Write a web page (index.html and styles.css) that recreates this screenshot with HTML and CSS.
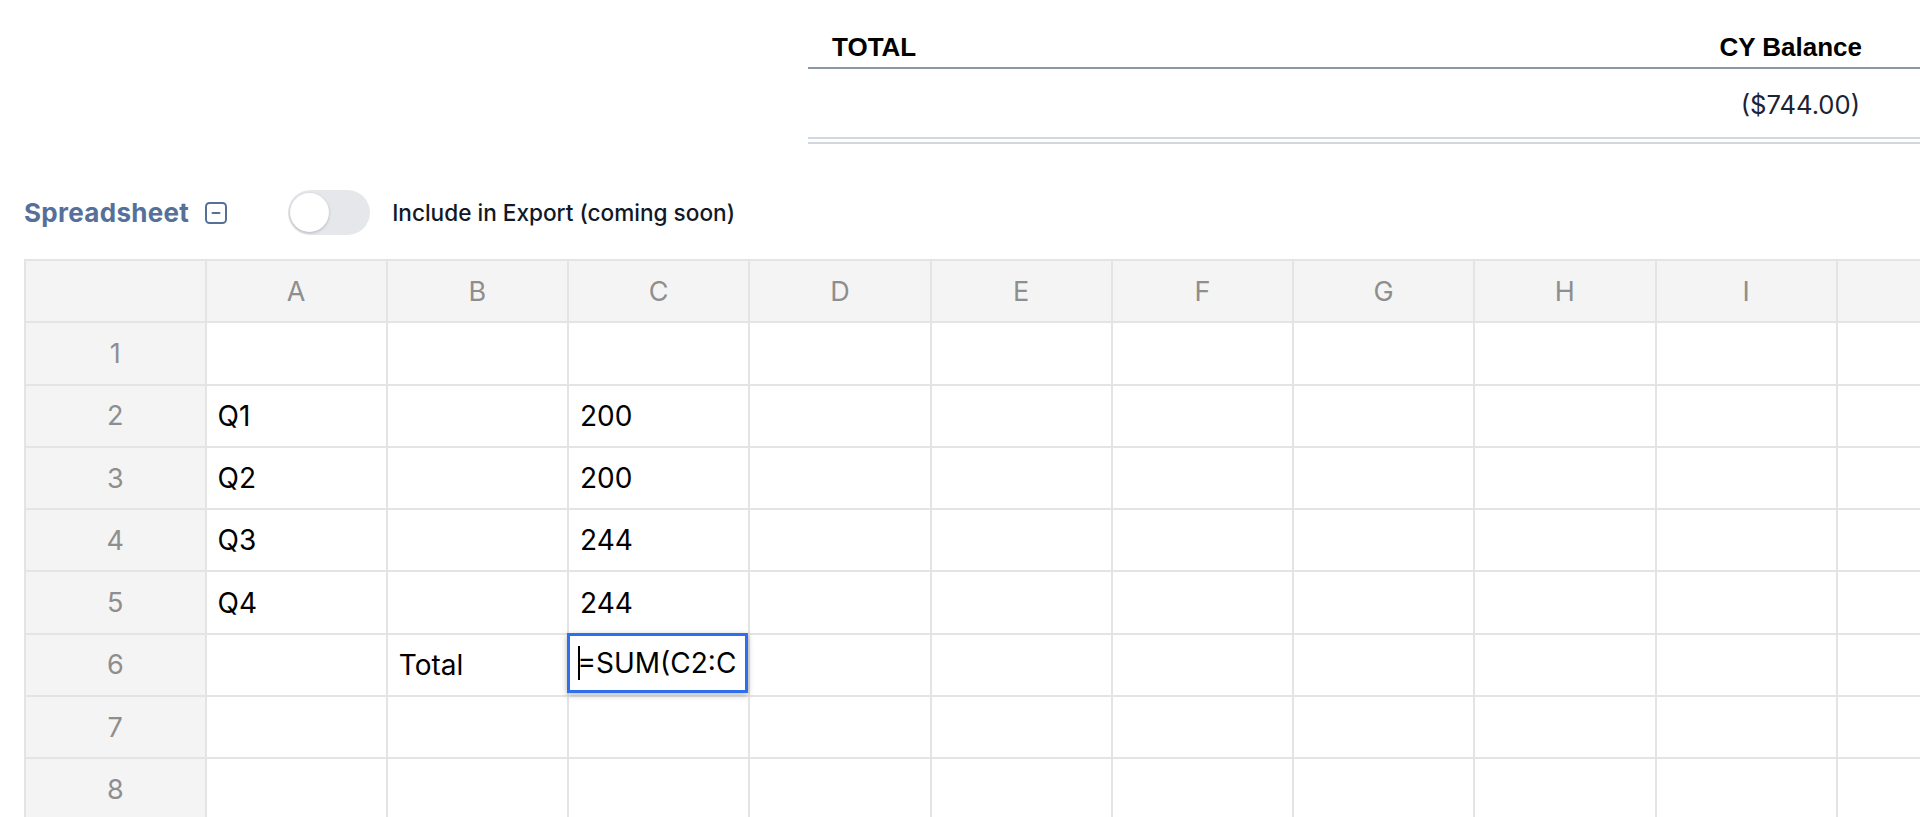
FILE: index.html
```html
<!DOCTYPE html>
<html lang="en">
<head>
<meta charset="utf-8">
<title>Spreadsheet</title>
<link rel="stylesheet" href="styles.css">
</head>
<body>
<div class="page">
  <section class="summary">
    <div class="sum-head"><span>TOTAL</span><span>CY Balance</span></div>
    <div class="sum-row"><span class="amount">($744.00)</span></div>
    <div class="sum-rule"></div>
  </section>

  <div class="toolbar">
    <h2 class="title">Spreadsheet</h2>
    <svg class="collapse" width="22" height="22" viewBox="0 0 22 22" aria-hidden="true">
      <rect x="1" y="1" width="20" height="20" rx="3.5" fill="none" stroke="currentColor" stroke-width="2"/>
      <line x1="7.5" y1="11" x2="14.5" y2="11" stroke="currentColor" stroke-width="2" stroke-linecap="round"/>
    </svg>
    <div class="toggle"><div class="knob"></div></div>
    <span class="toggle-label">Include in Export (coming soon)</span>
  </div>

  <div class="sheet">
    <div class="grid">
      <div class="hd corner"></div>
      <div class="hd">A</div><div class="hd">B</div><div class="hd">C</div><div class="hd">D</div><div class="hd">E</div>
      <div class="hd">F</div><div class="hd">G</div><div class="hd">H</div><div class="hd">I</div><div class="hd">J</div>

      <div class="hd">1</div>
      <div class="c"></div><div class="c"></div><div class="c"></div><div class="c"></div><div class="c"></div>
      <div class="c"></div><div class="c"></div><div class="c"></div><div class="c"></div><div class="c"></div>

      <div class="hd">2</div>
      <div class="c">Q1</div><div class="c"></div><div class="c">200</div><div class="c"></div><div class="c"></div>
      <div class="c"></div><div class="c"></div><div class="c"></div><div class="c"></div><div class="c"></div>

      <div class="hd">3</div>
      <div class="c">Q2</div><div class="c"></div><div class="c">200</div><div class="c"></div><div class="c"></div>
      <div class="c"></div><div class="c"></div><div class="c"></div><div class="c"></div><div class="c"></div>

      <div class="hd">4</div>
      <div class="c">Q3</div><div class="c"></div><div class="c">244</div><div class="c"></div><div class="c"></div>
      <div class="c"></div><div class="c"></div><div class="c"></div><div class="c"></div><div class="c"></div>

      <div class="hd">5</div>
      <div class="c">Q4</div><div class="c"></div><div class="c">244</div><div class="c"></div><div class="c"></div>
      <div class="c"></div><div class="c"></div><div class="c"></div><div class="c"></div><div class="c"></div>

      <div class="hd">6</div>
      <div class="c"></div><div class="c">Total</div>
      <div class="c editing"><div class="editor"><span class="caret"></span><span class="editor-text">=SUM(C2:C5)</span></div></div>
      <div class="c"></div><div class="c"></div>
      <div class="c"></div><div class="c"></div><div class="c"></div><div class="c"></div><div class="c"></div>

      <div class="hd">7</div>
      <div class="c"></div><div class="c"></div><div class="c"></div><div class="c"></div><div class="c"></div>
      <div class="c"></div><div class="c"></div><div class="c"></div><div class="c"></div><div class="c"></div>

      <div class="hd">8</div>
      <div class="c"></div><div class="c"></div><div class="c"></div><div class="c"></div><div class="c"></div>
      <div class="c"></div><div class="c"></div><div class="c"></div><div class="c"></div><div class="c"></div>
    </div>
  </div>
</div>
</body>
</html>
```

FILE: styles.css
```css
* { box-sizing: border-box; }

html, body {
  margin: 0;
  padding: 0;
  background: #ffffff;
  overflow: hidden;
}

body {
  font-family: "Inter", "Noto Sans", sans-serif;
  color: #111827;
}

.page {
  width: 1920px;
  height: 817px;
  overflow: hidden;
}

/* ---------- summary table ---------- */
.summary {
  margin-left: 808px;
}

.sum-head {
  display: flex;
  justify-content: space-between;
  align-items: flex-end;
  height: 69px;
  padding: 0 58px 5px 24px;
  border-bottom: 2px solid #8c97a9;
  font-family: "Liberation Sans", Arial, sans-serif;
  font-weight: 700;
  font-size: 26px;
  line-height: 30px;
  color: #000000;
}

.sum-row {
  display: flex;
  justify-content: flex-end;
  height: 70px;
  padding: 21px 60px 0 24px;
  border-bottom: 2px solid #d3d8df;
}

.amount {
  font-size: 25.6px;
  line-height: 30px;
  color: #1b2335;
}

.sum-rule {
  margin-top: 3px;
  height: 2px;
  background: #d3d8df;
}

/* ---------- toolbar ---------- */
.toolbar {
  display: flex;
  align-items: center;
  height: 45px;
  margin-top: 46px;
  padding-left: 24px;
}

.title {
  margin: 0;
  font-size: 26px;
  font-weight: 700;
  letter-spacing: 0.3px;
  line-height: 30px;
  color: #567099;
}

.collapse {
  display: block;
  margin-left: 16px;
  color: #567099;
}

.toggle {
  position: relative;
  width: 82px;
  height: 45px;
  margin-left: 61px;
  border-radius: 23px;
  background: #e5e7eb;
}

.knob {
  position: absolute;
  left: 2px;
  top: 3px;
  width: 39px;
  height: 39px;
  border-radius: 50%;
  background: #ffffff;
  box-shadow: 0 1px 3px rgba(0, 0, 0, 0.22);
}

.toggle-label {
  margin-left: 22px;
  font-size: 22.6px;
  font-weight: 500;
  line-height: 30px;
  color: #111827;
}

/* ---------- spreadsheet ---------- */
.sheet {
  margin-top: 24px;
  padding-left: 24px;
}

.grid {
  display: grid;
  grid-template-columns: 178.5px repeat(10, 179.25px);
  grid-auto-rows: 60.3px;
  gap: 2px;
  padding: 2px 0 0 2px;
  width: max-content;
  background: #e4e4e4;
}

.hd {
  display: flex;
  align-items: center;
  justify-content: center;
  background: #f4f4f4;
  color: #8e8e8e;
  font-size: 27px;
}

.c {
  position: relative;
  display: flex;
  align-items: center;
  padding-left: 11px;
  background: #ffffff;
  color: #000000;
  font-size: 28px;
  white-space: nowrap;
}

.editor {
  position: absolute;
  left: -2.5px;
  top: -2px;
  width: 181px;
  height: 60px;
  display: flex;
  align-items: center;
  padding: 0 7px 0 8px;
  border: 3px solid #2f6fee;
  background: #ffffff;
  box-shadow: 0 2px 6px rgba(0, 0, 0, 0.28);
  white-space: nowrap;
  font-size: 28px;
  color: #000000;
  z-index: 2;
}

.caret {
  flex: none;
  width: 0;
  height: 34px;
  margin-right: -2px;
  border-left: 2px solid #000000;
}

.editor-text {
  flex: 1;
  min-width: 0;
  overflow: hidden;
}
```
